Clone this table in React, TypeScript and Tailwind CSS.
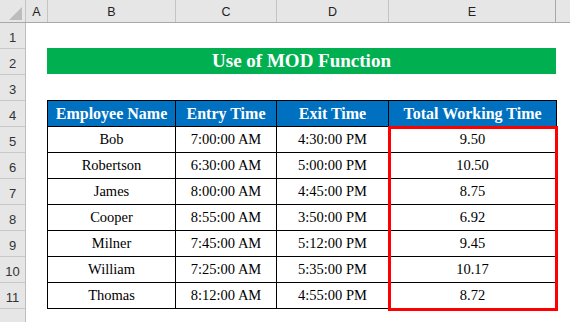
import React from "react";

const rows = [
  ["Bob", "7:00:00 AM", "4:30:00 PM", "9.50"],
  ["Robertson", "6:30:00 AM", "5:00:00 PM", "10.50"],
  ["James", "8:00:00 AM", "4:45:00 PM", "8.75"],
  ["Cooper", "8:55:00 AM", "3:50:00 PM", "6.92"],
  ["Milner", "7:45:00 AM", "5:12:00 PM", "9.45"],
  ["William", "7:25:00 AM", "5:35:00 PM", "10.17"],
  ["Thomas", "8:12:00 AM", "4:55:00 PM", "8.72"],
];

const widths = ["w-[128px]", "w-[101px]", "w-[112px]", "w-[168px]"];

export default function App() {
  return (
    <div className="w-[570px] h-[322px] overflow-hidden bg-white flex flex-col">
      {/* column header bar */}
      <div className="flex h-[23px] shrink-0 bg-[#e6e6e6] border-b border-[#a8a8a8] text-[12.5px] text-[#222] font-['Liberation_Sans',sans-serif]">
        <div className="w-[26px] shrink-0 border-r border-[#c4c4c4] relative">
          <svg className="absolute left-[9px] top-[7px]" width="13" height="13" viewBox="0 0 13 13">
            <polygon points="13,0 13,13 0,13" fill="#bcbcbc" />
          </svg>
        </div>
        <div className="w-[22px] shrink-0 border-r border-[#c4c4c4] flex items-center justify-center pt-[2px]">A</div>
        <div className="w-[128px] shrink-0 border-r border-[#c4c4c4] flex items-center justify-center pt-[2px]">B</div>
        <div className="w-[101px] shrink-0 border-r border-[#c4c4c4] flex items-center justify-center pt-[2px]">C</div>
        <div className="w-[112px] shrink-0 border-r border-[#c4c4c4] flex items-center justify-center pt-[2px]">D</div>
        <div className="w-[167px] shrink-0 border-r border-[#a8a8a8] flex items-center justify-center pt-[2px]">E</div>
        <div className="flex-1" />
      </div>

      <div className="flex flex-1">
        {/* row header */}
        <div className="w-[26px] shrink-0 bg-[#e6e6e6] border-r border-[#bdbdbd] flex flex-col text-[13px] text-[#333] font-['Liberation_Sans',sans-serif]">
          {Array.from({ length: 12 }, (_, i) => (
            <div
              key={i}
              className="h-[26px] shrink-0 border-b border-[#c8c8c8] flex items-center justify-center pt-[5px]"
            >
              {i < 11 ? i + 1 : ""}
            </div>
          ))}
        </div>

        {/* sheet content */}
        <div className="flex flex-col pl-[21px] font-['Liberation_Serif',serif]">
          <div className="h-[25px]" />
          <div className="h-[26px] w-[509px] bg-[#00b050] text-white font-bold text-[19px] flex items-center justify-center">
            Use of MOD Function
          </div>
          <div className="h-[26px]" />

          <div className="relative w-[510px] border-l border-t border-black">
            <div className="flex bg-[#0070c0] text-white font-bold text-[16px]">
              {["Employee Name", "Entry Time", "Exit Time", "Total Working Time"].map((h, i) => (
                <div
                  key={h}
                  className={`${widths[i]} h-[26px] shrink-0 border-r border-b border-black flex items-center justify-center`}
                >
                  {h}
                </div>
              ))}
            </div>
            {rows.map((r) => (
              <div key={r[0]} className="flex text-black text-[14.5px]">
                {r.map((c, i) => (
                  <div
                    key={i}
                    className={`${widths[i]} h-[26px] shrink-0 border-r border-b border-black flex items-center justify-center pt-[1px]`}
                  >
                    {c}
                  </div>
                ))}
              </div>
            ))}
            <div className="absolute left-[340px] top-[25px] w-[170px] h-[185px] border-[3px] border-[#ff0000] pointer-events-none" />
          </div>
        </div>
      </div>
    </div>
  );
}
